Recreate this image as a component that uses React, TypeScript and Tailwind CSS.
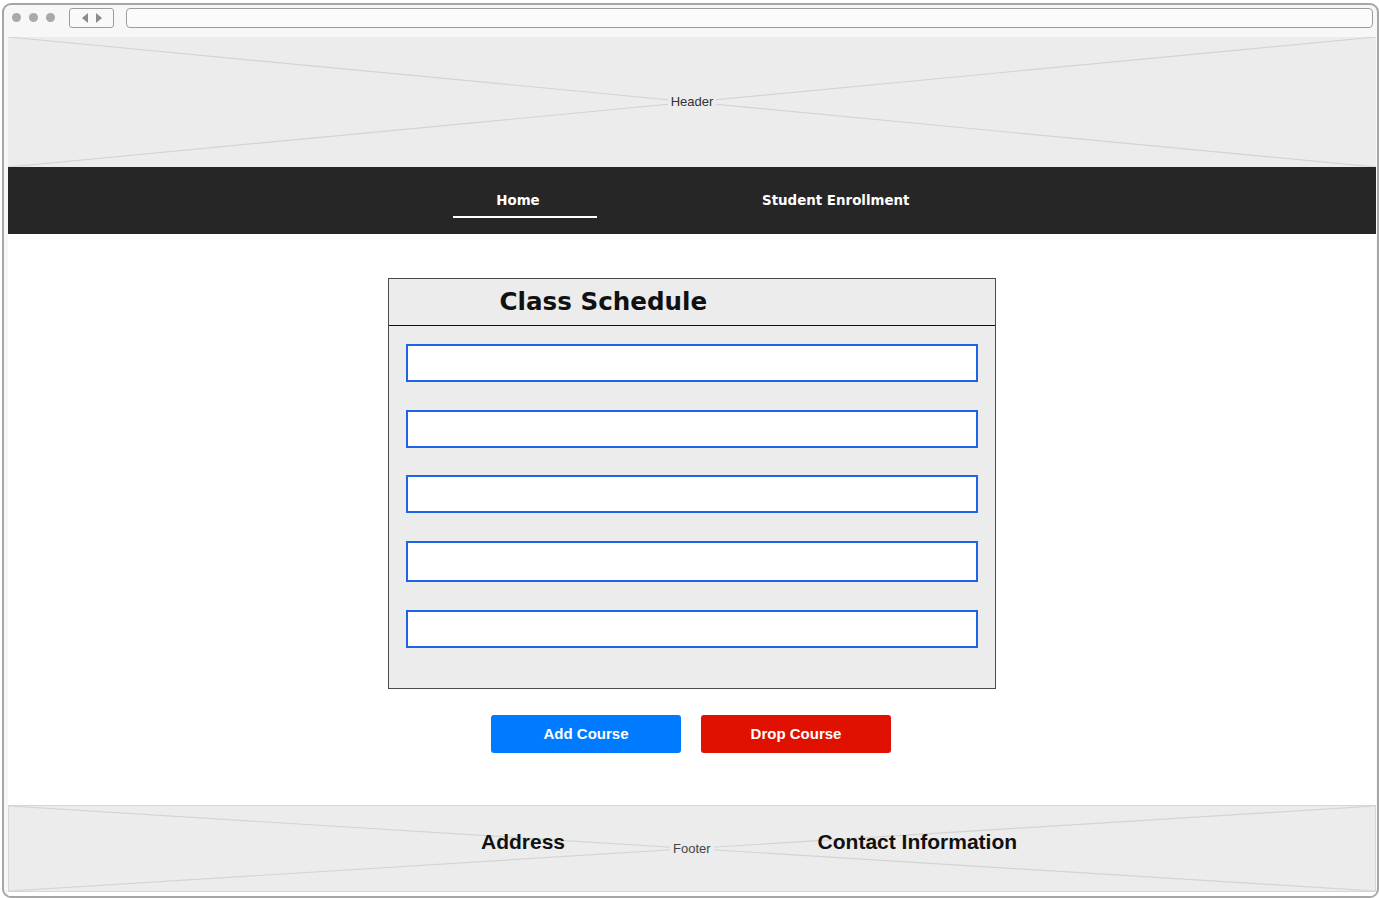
import React from 'react'

function Cross() {
  return (
    <svg className="absolute inset-0 h-full w-full" preserveAspectRatio="none" viewBox="0 0 100 100">
      <line x1="0" y1="0" x2="100" y2="100" stroke="#d4d4d4" strokeWidth="1.2" vectorEffect="non-scaling-stroke" />
      <line x1="100" y1="0" x2="0" y2="100" stroke="#d4d4d4" strokeWidth="1.2" vectorEffect="non-scaling-stroke" />
    </svg>
  )
}

const fields = ['h-[38px]', 'h-[38px]', 'h-[38px]', 'h-[41px]', 'h-[38px]']
const fieldGaps = ['mt-[18px]', 'mt-[28px]', 'mt-[27px]', 'mt-[28px]', 'mt-[28px]']

export default function App() {
  return (
    <div className="w-[1379px] h-[898px] bg-white pl-[2px] pt-[3px] font-['Liberation_Sans',Arial,sans-serif]">
      <div className="flex h-[895px] w-[1377px] flex-col overflow-hidden rounded-[9px] border-2 border-[#a6a6a6] bg-[#f7f7f7]">
        {/* browser chrome */}
        <div className="flex h-[32px] shrink-0 items-start pl-[8px] pr-[4px] pt-[3px]">
          <div className="mt-[5px] flex gap-[8px]">
            <span className="h-[9px] w-[9px] rounded-full bg-[#a9a9a9]" />
            <span className="h-[9px] w-[9px] rounded-full bg-[#a9a9a9]" />
            <span className="h-[9px] w-[9px] rounded-full bg-[#a9a9a9]" />
          </div>
          <div className="ml-[14px] flex h-[20px] w-[45px] items-center justify-center gap-[8px] rounded-[3px] border-[1.5px] border-[#9c9c9c] bg-[#f9f9f9]">
            <svg width="6" height="10" viewBox="0 0 6 10"><path d="M6 0 L0 5 L6 10 Z" fill="#8c8c8c" /></svg>
            <svg width="6" height="10" viewBox="0 0 6 10"><path d="M0 0 L6 5 L0 10 Z" fill="#8c8c8c" /></svg>
          </div>
          <div className="ml-[12px] h-[20px] flex-1 rounded-[4px] border-[1.5px] border-[#9c9c9c] bg-[#fbfbfb]" />
        </div>

        <div className="ml-[4px] mr-0 flex w-[1368px] flex-1 flex-col bg-white">
          {/* header placeholder */}
          <div className="relative flex h-[130px] shrink-0 items-center justify-center bg-[#ececec]">
            <Cross />
            <span className="relative bg-[#ececec] px-[3px] text-[13px] text-[#333]">Header</span>
          </div>

          {/* nav */}
          <nav className="flex h-[67px] shrink-0 items-center bg-[#262626] font-['DejaVu_Sans',sans-serif] text-[13.4px] font-bold text-white">
            <div className="ml-[445px] flex h-full w-[144px] flex-col items-center justify-center pt-[8px]">
              <span className="pr-[14px]">Home</span>
              <span className="mt-[5px] h-[2px] w-full bg-white" />
            </div>
            <div className="ml-[165px] flex h-full items-center pt-[1px]">
              <span>Student Enrollment</span>
            </div>
          </nav>

          {/* main */}
          <main className="flex flex-1 flex-col items-center pt-[44px]">
            <section className="ml-[-1px] flex h-[411px] w-[608px] flex-col border border-[#4a4a4a] bg-[#ececec]">
              <div className="flex h-[47px] shrink-0 items-center border-b border-[#111] pl-[111px]">
                <h1 className="font-['DejaVu_Sans',sans-serif] text-[24.6px] font-bold text-[#111]">Class Schedule</h1>
              </div>
              <div className="flex flex-col px-[17px]">
                {fields.map((h, i) => (
                  <div key={i} className={`${fieldGaps[i]} ${h} w-[572px] border-2 border-[#1f63e6] bg-white`} />
                ))}
              </div>
            </section>

            <div className="ml-[-2px] mt-[26px] flex gap-[20px] text-[15px] font-bold text-white">
              <button className="h-[38px] w-[190px] rounded-[3px] bg-[#007bff]">Add Course</button>
              <button className="h-[38px] w-[190px] rounded-[3px] bg-[#e01100]">Drop Course</button>
            </div>
          </main>

          {/* footer placeholder */}
          <footer className="relative mb-[4px] flex h-[87px] shrink-0 items-center border border-[#d6d6d6] bg-[#ececec]">
            <Cross />
            <span className="relative ml-[472px] mt-[-14px] text-[21px] font-bold text-[#111]">Address</span>
            <span className="relative ml-[105px] mt-[1px] bg-[#ececec] px-[3px] text-[13px] text-[#444]">Footer</span>
            <span className="relative ml-[104px] mt-[-14px] text-[21px] font-bold text-[#111]">Contact Information</span>
          </footer>
        </div>
      </div>
    </div>
  )
}
